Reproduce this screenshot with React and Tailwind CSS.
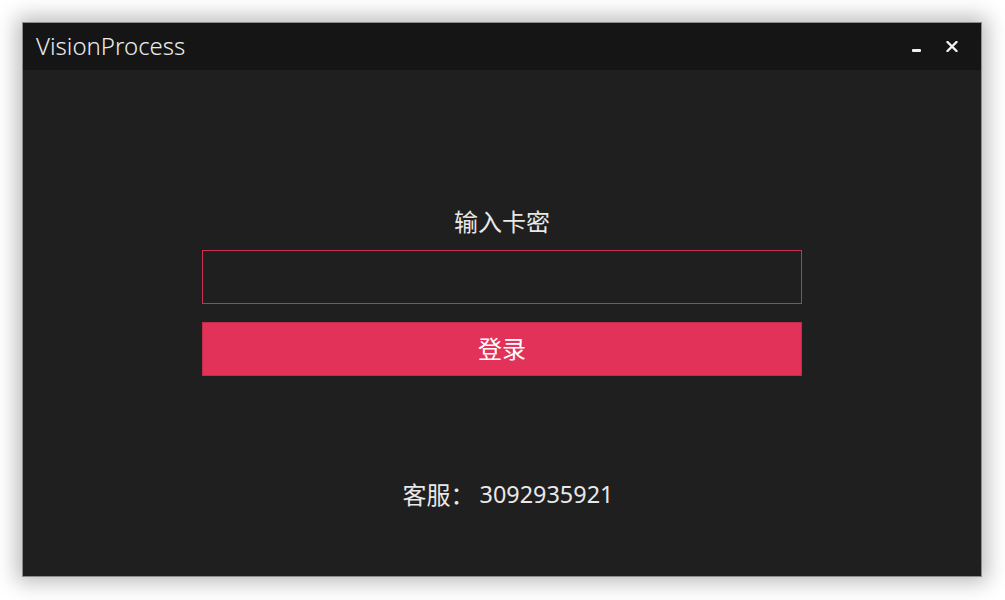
import { useState } from 'react';

const FONT = { fontFamily: '"Noto Sans", "Noto Sans CJK SC", sans-serif' };

export default function App() {
  const [card, setCard] = useState('');

  return (
    <div className="w-[1005px] h-[600px] bg-white pt-[22px] pl-[22px]" style={FONT}>
      {/* 窗口 */}
      <div className="w-[960px] h-[555px] flex flex-col border border-[#8c8c8c] bg-[#1f1f1f] shadow-[0_0_20px_5px_rgba(0,0,0,0.28)]">
        {/* 标题栏 */}
        <div className="h-[47px] flex items-center justify-between bg-[#151515] pl-[13px] pr-[23px]">
          <span className="text-[24px] font-light text-[#ececec] leading-none pb-[1px]">VisionProcess</span>
          <div className="flex items-center gap-[25px]">
            <button className="w-[9px] h-[12px] flex items-end pb-[1px]" title="最小化">
              <span className="block w-[9px] h-[2.5px] bg-[#f0f0f0] rounded-[1px]" />
            </button>
            <button className="w-[12px] h-[12px] flex items-center justify-center" title="关闭">
              <svg width="12" height="11" viewBox="0 0 12 11">
                <path d="M1.5 1 L10.5 10 M10.5 1 L1.5 10" stroke="#f2f2f2" strokeWidth="2.4" strokeLinecap="round" />
              </svg>
            </button>
          </div>
        </div>

        {/* 内容 */}
        <div className="flex-1 flex flex-col items-center pt-[136px]">
          <div className="h-[32px] flex items-center text-[24px] text-[#e8e8e8]">输入卡密</div>
          <input
            value={card}
            onChange={(e) => setCard(e.target.value)}
            className="mt-[12px] w-[600px] h-[54px] bg-transparent border-[1.5px] border-[#c93153] outline-none px-3 text-[20px] text-[#e8e8e8]"
          />
          <button className="mt-[18px] w-[600px] h-[54px] bg-[#e3325a] border border-[#c02c4c] text-[24px] text-white">
            登录
          </button>
          <div className="mt-[103px] h-[32px] pl-[12px] flex items-center text-[24px] text-[#e8e8e8]">
            <span>客服：</span>
            <span className="ml-[5px] text-[23.4px]">3092935921</span>
          </div>
        </div>
      </div>
    </div>
  );
}
